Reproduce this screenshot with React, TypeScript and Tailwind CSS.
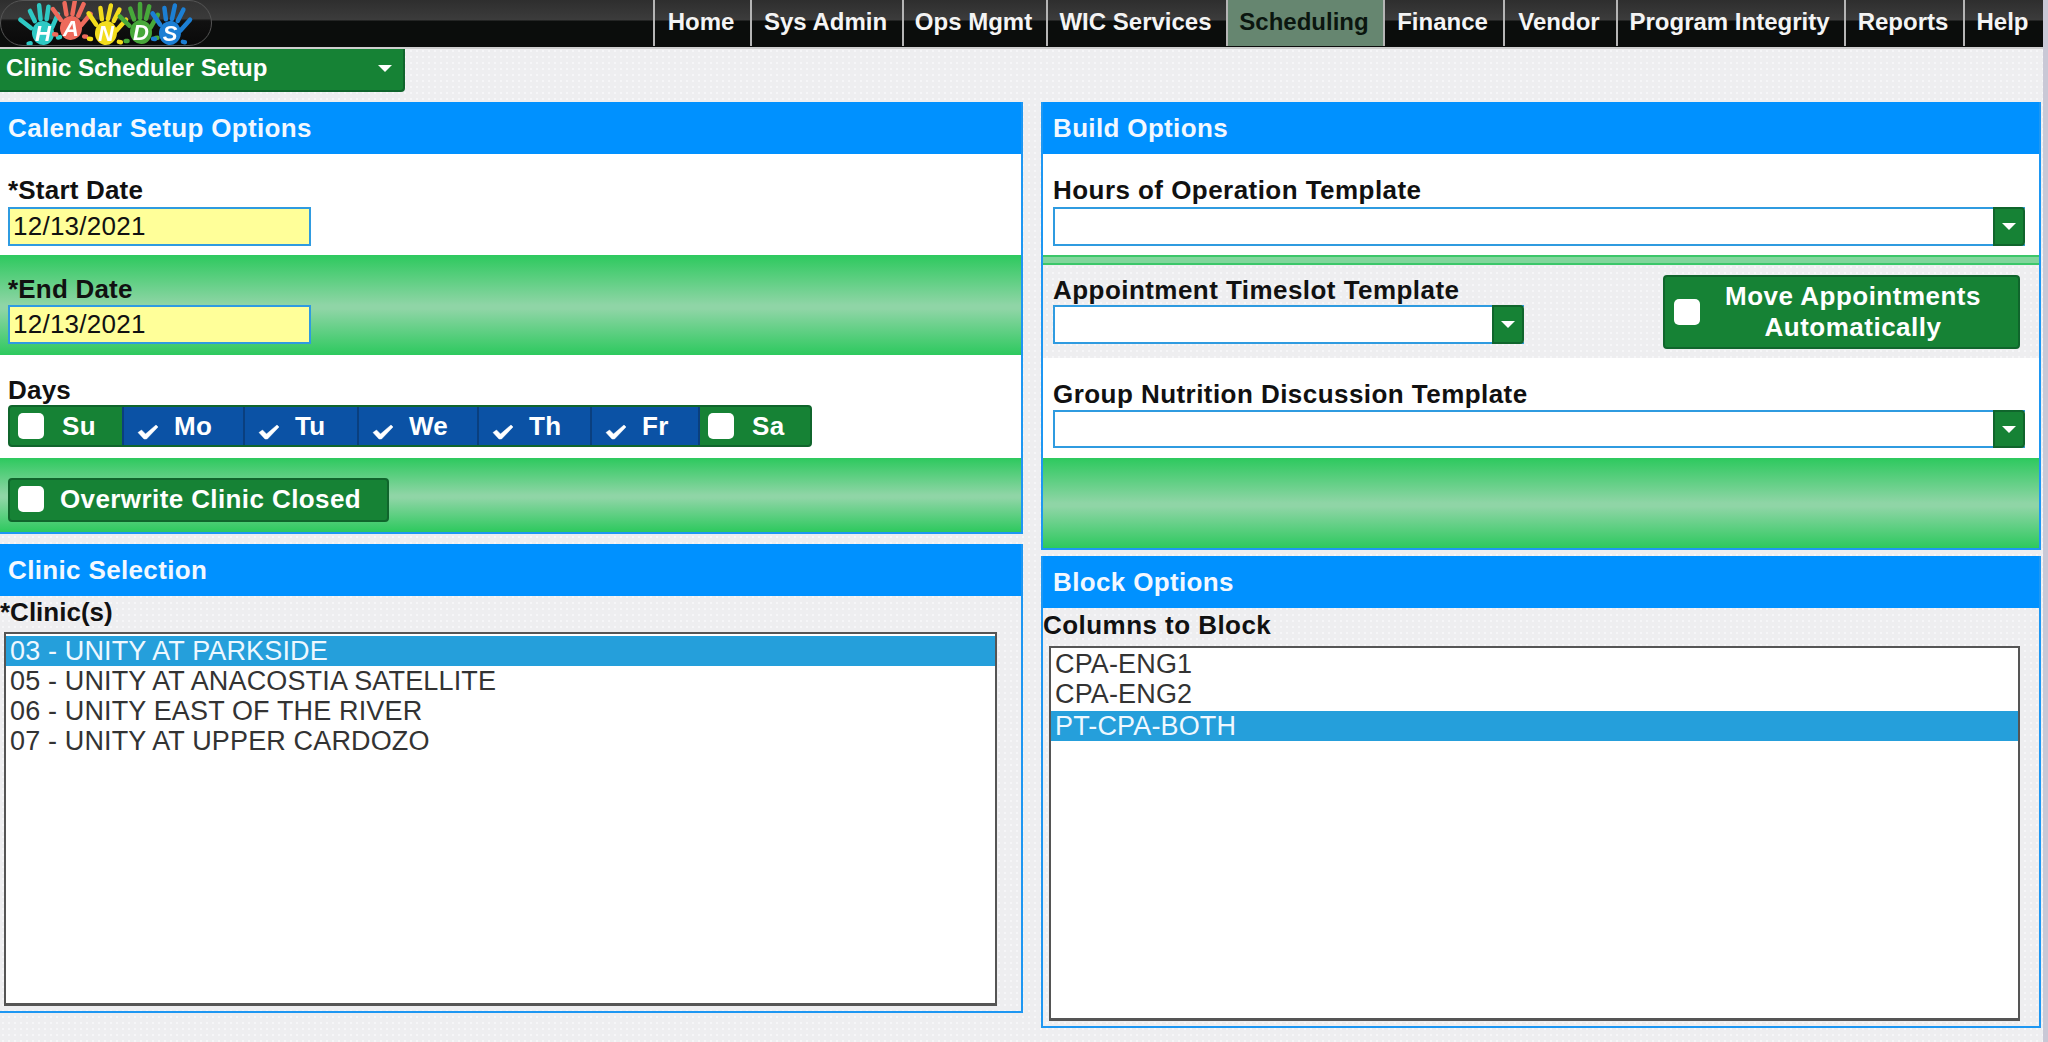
const font = "font-['Liberation_Sans',Arial,sans-serif]";

const navItems = [
  { label: "Home", w: "w-[97px]" },
  { label: "Sys Admin", w: "w-[152px]" },
  { label: "Ops Mgmt", w: "w-[144px]" },
  { label: "WIC Services", w: "w-[180px]" },
  { label: "Scheduling", w: "w-[157px]", active: true },
  { label: "Finance", w: "w-[120px]" },
  { label: "Vendor", w: "w-[113px]" },
  { label: "Program Integrity", w: "w-[228px]" },
  { label: "Reports", w: "w-[119px]" },
  { label: "Help", w: "w-[80px]" },
];

function Hand({ x, y, color, letter, tilt }: { x: number; y: number; color: string; letter: string; tilt: number }) {
  return (
    <g transform={`translate(${x} ${y})`}>
      <g transform={`rotate(${tilt})`}>
        <ellipse cx="0" cy="0" rx="11" ry="12" fill={color} />
        <path
          d="M-11 -7 L-20 -17 M-6 -13 L-9 -24 M0 -14 L1 -28 M6 -13 L10 -25 M10 -4 L18 -16 M-14 8 L-16 8 M14 7 L16 7"
          stroke={color}
          strokeWidth="4.5"
          strokeLinecap="round"
        />
      </g>
      <text x="0" y="8" textAnchor="middle" fontSize="22" fontWeight="700" fontStyle="italic" fill="#fff" fontFamily="Liberation Sans, sans-serif">
        {letter}
      </text>
    </g>
  );
}

function Logo() {
  return (
    <div className="absolute left-0 top-0 h-[46px] w-[212px] overflow-hidden rounded-[24px] border border-[#555] bg-[linear-gradient(#333_0,#3a3a3a_40%,#111_45%,#0a0a0a_100%)]">
      <svg width="212" height="46" viewBox="0 0 212 46" className="blur-[0.5px]">
        <Hand x={42} y={32} color="#2ec9c4" letter="H" tilt={-10} />
        <Hand x={70} y={27} color="#ee6a5c" letter="A" tilt={6} />
        <Hand x={105} y={32} color="#f2dc1c" letter="N" tilt={8} />
        <Hand x={140} y={31} color="#47a83a" letter="D" tilt={-4} />
        <Hand x={169} y={32} color="#1c7fd4" letter="S" tilt={8} />
      </svg>
    </div>
  );
}

function Arrow() {
  return <span className="h-0 w-0 border-x-[7px] border-t-[7px] border-x-transparent border-t-white" />;
}

function Check() {
  return (
    <svg width="22" height="16" viewBox="0 0 22 16" className="mt-[11px]">
      <path d="M1 8.5 L4.5 6 L8.5 10 L19 1 L21 3 L9.5 15 L7 15 Z" fill="#fff" stroke="#fff" strokeWidth="0.5" strokeLinejoin="round" />
    </svg>
  );
}

function Box() {
  return <span className="h-[26px] w-[26px] shrink-0 rounded-[5px] bg-white" />;
}

function PanelHeader({ title, inset = "pl-[8px]" }: { title: string; inset?: string }) {
  return (
    <div className={`flex h-[52px] items-center bg-[#0091ff] text-[26px] font-bold leading-none tracking-[0.35px] text-[#f2f8ff] ${inset}`}>
      {title}
    </div>
  );
}

function Label({ children, className = "" }: { children: React.ReactNode; className?: string }) {
  return <div className={`text-[26px] font-bold leading-[28px] tracking-[0.45px] text-[#111] ${className}`}>{children}</div>;
}

function Combo({ className }: { className: string }) {
  return (
    <div className={`flex border-y-2 border-l-2 border-[#2f9be0] bg-white ${className}`}>
      <div className="flex-1" />
      <div className="-my-[2px] flex w-[32px] items-center justify-center rounded-r-[4px] border-2 border-[#10652c] bg-[#168235]">
        <Arrow />
      </div>
    </div>
  );
}

function DateInput() {
  return (
    <div className="ml-[8px] flex h-[39px] w-[303px] items-center border-2 border-[#2f9be0] bg-[#ffff99] pb-[2px] pl-[3px] text-[26px] leading-none tracking-[0.25px] text-[#111]">
      12/13/2021
    </div>
  );
}

const glossy = "bg-[linear-gradient(#2dc95e_0%,#8fd5a6_50%,#8fd5a6_54%,#2dc95e_100%)]";
const dotted = "bg-[#eeeef0] bg-[radial-gradient(#f6f6f8_1px,transparent_1px)] bg-[length:6px_6px]";

const days = [
  { d: "Su", w: "w-[112px]", gap: "gap-[18px]" },
  { d: "Mo", w: "w-[121px]", on: true },
  { d: "Tu", w: "w-[114px]", on: true },
  { d: "We", w: "w-[120px]", on: true },
  { d: "Th", w: "w-[113px]", on: true },
  { d: "Fr", w: "w-[108px]", on: true },
  { d: "Sa", w: "w-[112px]", gap: "gap-[18px]" },
];

function ListBox({
  items,
  selected,
  className,
  selectedClass = "",
}: {
  items: string[];
  selected: number;
  className: string;
  selectedClass?: string;
}) {
  return (
    <div className={`border-2 border-b-[3px] border-[#555] bg-white text-[27px] leading-[30px] tracking-[0.15px] text-[#333] ${className}`}>
      {items.map((t, i) => (
        <div
          key={t}
          className={`h-[30px] whitespace-nowrap pl-[4px] ${i === selected ? `bg-[#259fdb] text-[#eef8ff] ${selectedClass}` : ""}`}
        >
          {t}
        </div>
      ))}
    </div>
  );
}

export default function App() {
  return (
    <div className={`${font} ${dotted} relative h-[1042px] w-[2048px] overflow-hidden`}>
      <nav className="relative flex h-[49px] w-[2043px] justify-end border-b-2 border-[#cfcfcf] bg-[linear-gradient(#2e2e2e_0,#3c3c3c_20px,#0b0d0c_21px,#0b0d0c_100%)]">
        <Logo />
        {navItems.map((n) => (
          <div
            key={n.label}
            className={`flex ${n.w} h-[46px] items-center justify-center border-l-2 border-[#b5b5b5] pb-[2px] pr-[3px] text-[24px] font-bold leading-none ${
              n.active ? "bg-[#668670] text-[#0b160f]" : "text-[#f4f4f4]"
            }`}
          >
            {n.label}
          </div>
        ))}
      </nav>

      <div className="flex h-[53px] w-[2043px] items-start">
        <div className="flex h-[43px] w-[405px] items-center justify-between rounded-br-[4px] border-b-2 border-r-2 border-[#10652c] bg-[#168235] pb-[3px] pl-[6px] pr-[11px] text-[24px] font-bold leading-none text-white">
          Clinic Scheduler Setup
          <Arrow />
        </div>
      </div>

      <div className="flex items-start">
        <div className="flex w-[1023px] flex-col">
          <section className="flex h-[432px] flex-col border-b-2 border-r-2 border-[#1e97f2]">
            <PanelHeader title="Calendar Setup Options" />
            <div className="h-[101px] bg-white pt-[22px]">
              <Label className="pl-[8px] !tracking-[0.2px]">*Start Date</Label>
              <div className="mt-[3px]"><DateInput /></div>
            </div>
            <div className={`h-[100px] pt-[20px] ${glossy}`}>
              <Label className="pl-[8px] !tracking-[0.2px]">*End Date</Label>
              <div className="mt-[2px]"><DateInput /></div>
            </div>
            <div className="h-[103px] bg-white pt-[21px]">
              <Label className="pl-[8px] !tracking-[0.2px]">Days</Label>
              <div className="ml-[8px] mt-[1px] flex h-[42px] w-[804px] overflow-hidden rounded-[4px] border-2 border-[#10652c] bg-[#168235]">
                {days.map((x, i) => (
                  <div
                    key={x.d}
                    className={`flex ${x.w} items-center pl-[8px] text-[26px] font-bold leading-none tracking-[0.3px] text-white ${
                      x.on ? "gap-[15px] border-l-2 border-[#0a3f7f] bg-[#0b52a5] pl-[13px]" : x.gap
                    } ${i === 6 ? "border-l-2 border-[#0a3f7f]" : ""}`}
                  >
                    {x.on ? <Check /> : <Box />}
                    {x.d}
                  </div>
                ))}
              </div>
            </div>
            <div className={`flex-1 pt-[20px] ${glossy}`}>
              <div className="ml-[8px] flex h-[44px] w-[381px] items-center gap-[16px] rounded-[4px] border-2 border-[#10652c] bg-[#168235] pb-[2px] pl-[8px] text-[26px] font-bold leading-none tracking-[0.4px] text-white">
                <Box />
                Overwrite Clinic Closed
              </div>
            </div>
          </section>

          <section className="mt-[10px] flex h-[469px] flex-col border-b-2 border-r-2 border-[#1e97f2]">
            <PanelHeader title="Clinic Selection" />
            <Label className="mt-[2px] !tracking-[0px]">*Clinic(s)</Label>
            <ListBox
              className="ml-[4px] mt-[6px] h-[374px] w-[993px] pt-[2px]"
              selected={0}
              items={["03 - UNITY AT PARKSIDE", "05 - UNITY AT ANACOSTIA SATELLITE", "06 - UNITY EAST OF THE RIVER", "07 - UNITY AT UPPER CARDOZO"]}
            />
          </section>
        </div>

        <div className="ml-[18px] flex w-[1000px] flex-col">
          <section className="flex h-[448px] flex-col border-b-2 border-l-2 border-r-2 border-[#1e97f2]">
            <PanelHeader title="Build Options" inset="pl-[10px]" />
            <div className="h-[101px] bg-white pl-[10px] pt-[22px]">
              <Label>Hours of Operation Template</Label>
              <Combo className="mt-[3px] h-[39px] w-[972px]" />
            </div>
            <div className="h-[10px] border-y-2 border-[#3cc76a] bg-[#82d69c]" />
            <div className="flex h-[93px] items-start justify-between pl-[10px] pr-[19px]">
              <div className="pt-[11px]">
                <Label>Appointment Timeslot Template</Label>
                <Combo className="mt-[1px] h-[39px] w-[471px]" />
              </div>
              <div className="mt-[10px] flex h-[74px] w-[357px] items-center rounded-[4px] border-2 border-[#10652c] bg-[#168235] pl-[9px] pr-[12px]">
                <Box />
                <div className="flex-1 text-center text-[26px] font-bold leading-[31px] tracking-[0.5px] text-white">
                  Move Appointments
                  <br />
                  Automatically
                </div>
              </div>
            </div>
            <div className="h-[100px] bg-white pl-[10px] pt-[22px]">
              <Label>Group Nutrition Discussion Template</Label>
              <Combo className="mt-[2px] h-[38px] w-[972px]" />
            </div>
            <div className={`flex-1 ${glossy}`} />
          </section>

          <section className="mt-[6px] flex h-[472px] flex-col border-b-2 border-l-2 border-r-2 border-[#1e97f2]">
            <PanelHeader title="Block Options" inset="pl-[10px]" />
            <Label className="mt-[3px]">Columns to Block</Label>
            <ListBox
              className="ml-[6px] mt-[7px] h-[375px] w-[971px] pt-[1px]"
              selected={2}
              selectedClass="mt-[2px]"
              items={["CPA-ENG1", "CPA-ENG2", "PT-CPA-BOTH"]}
            />
          </section>
        </div>
      </div>

      <div className="absolute right-0 top-0 h-full w-[5px] bg-[#c9c8d6]" />
    </div>
  );
}
